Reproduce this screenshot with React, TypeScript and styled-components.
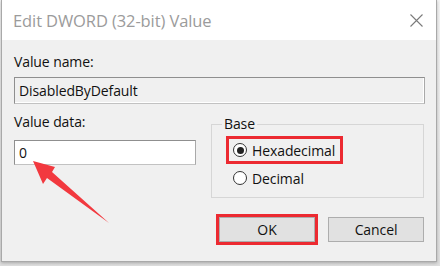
import * as React from 'react';
import styled, { createGlobalStyle } from 'styled-components';

const GlobalStyle = createGlobalStyle`
  html, body {
    margin: 0;
    padding: 0;
    background: #f4f4f4;
  }
  body {
    font-family: "Open Sans", "Noto Sans", "Liberation Sans", sans-serif;
  }
`;

const Stage = styled.div`
  position: relative;
  width: 440px;
  height: 266px;
  overflow: hidden;
  background: linear-gradient(#f4f4f4, #dedede);
`;

const Window = styled.div`
  width: 436px;
  height: 262px;
  box-sizing: border-box;
  margin-left: 1px;
  border: 1px solid #a9a9a9;
  border-top: 0;
  display: flex;
  flex-direction: column;
  background: #f0f0f0;
  box-shadow: 0 1px 3px rgba(0, 0, 0, 0.25);
`;

const TitleBar = styled.div`
  height: 40px;
  flex: none;
  background: #fff;
  display: flex;
  align-items: center;
  justify-content: space-between;
  padding: 0 0 0 11px;
`;

const Title = styled.span`
  font-size: 16.5px;
  color: #9b9b9b;
  letter-spacing: -0.1px;
`;

const CloseButton = styled.div`
  width: 40px;
  height: 40px;
  display: flex;
  align-items: center;
  justify-content: center;
`;

const Body = styled.div`
  flex: 1;
  display: flex;
  flex-direction: column;
  padding: 13px 11px 0 12px;
`;

const Label = styled.div`
  font-size: 14px;
  line-height: 18px;
  color: #111;
  letter-spacing: -0.1px;
`;

const Field = styled.div<{ $readOnly?: boolean; $width?: string; $height: number }>`
  box-sizing: border-box;
  width: ${p => p.$width || '100%'};
  height: ${p => p.$height}px;
  border: 1px solid #8f8f8f;
  border-right-color: #a9a9a9;
  border-bottom-color: #c2c2c2;
  box-shadow: inset 0 -1px 0 #fff, inset -1px 0 0 #fff;
  background: ${p => (p.$readOnly ? '#f0f0f0' : '#fff')};
  font-size: 14px;
  color: #111;
  display: flex;
  align-items: center;
  padding-left: 4px;
  letter-spacing: -0.1px;
`;

const Row = styled.div`
  display: flex;
  justify-content: space-between;
  margin-top: 9px;
`;

const Column = styled.div`
  display: flex;
  flex-direction: column;
  gap: 9px;
`;

const GroupBox = styled.fieldset`
  box-sizing: border-box;
  width: 213px;
  height: 82px;
  margin: 3px 1px 0 0;
  padding: 7px 0 0 17px;
  border: 1px solid #d6d6d6;
  display: flex;
  flex-direction: column;
`;

const Legend = styled.legend`
  font-size: 14px;
  color: #111;
  padding: 0 2px;
  margin-left: -7px;
  line-height: 16px;
  letter-spacing: -0.1px;
`;

const RadioOption = styled.div<{ $marked?: boolean }>`
  display: flex;
  align-items: center;
  gap: 5px;
  height: 22px;
  width: 111px;
  padding-left: 4px;
  box-sizing: border-box;
  font-size: 14px;
  color: #111;
  letter-spacing: -0.1px;
  outline: ${p => (p.$marked ? '3px solid #ec2a31' : 'none')};
  outline-offset: 0;
  margin-bottom: 6px;
`;

const RadioCircle = styled.span<{ $checked?: boolean }>`
  width: 12px;
  height: 12px;
  border-radius: 50%;
  border: 1px solid #333;
  background: #fff;
  display: flex;
  align-items: center;
  justify-content: center;
  flex: none;

  &::after {
    content: '';
    width: 7px;
    height: 7px;
    border-radius: 50%;
    background: ${p => (p.$checked ? '#222' : 'transparent')};
  }
`;

const ButtonRow = styled.div`
  display: flex;
  justify-content: flex-end;
  gap: 13px;
  margin-top: 19px;
  padding-right: 1px;
`;

const Button = styled.div<{ $marked?: boolean }>`
  box-sizing: border-box;
  width: 96px;
  height: 25px;
  background: #e1e1e1;
  border: 1px solid #adadad;
  display: flex;
  align-items: center;
  justify-content: center;
  font-size: 14px;
  color: #111;
  letter-spacing: -0.1px;
  outline: ${p => (p.$marked ? '3px solid #ec2a31' : 'none')};
  outline-offset: 0;
`;

const Arrow = styled.svg`
  position: absolute;
  left: 0;
  top: 0;
  pointer-events: none;
`;

export default function App() {
  return (
    <Stage>
      <GlobalStyle />
      <Window>
        <TitleBar>
          <Title>Edit DWORD (32-bit) Value</Title>
          <CloseButton>
            <svg width="13" height="13" viewBox="0 0 13 13">
              <path d="M0.5 0.5 L12.5 12.5 M12.5 0.5 L0.5 12.5" stroke="#7a7a7a" strokeWidth="1.1" />
            </svg>
          </CloseButton>
        </TitleBar>
        <Body>
          <Label>Value name:</Label>
          <Field $readOnly $height={27} style={{ marginTop: 6 }}>
            DisabledByDefault
          </Field>
          <Row>
            <Column>
              <Label>Value data:</Label>
              <Field $width="182px" $height={25}>0</Field>
            </Column>
            <GroupBox>
              <Legend>Base</Legend>
              <RadioOption $marked>
                <RadioCircle $checked />
                Hexadecimal
              </RadioOption>
              <RadioOption>
                <RadioCircle />
                Decimal
              </RadioOption>
            </GroupBox>
          </Row>
          <ButtonRow>
            <Button $marked>OK</Button>
            <Button>Cancel</Button>
          </ButtonRow>
        </Body>
      </Window>
      <Arrow width="440" height="266" viewBox="0 0 440 266">
        <polygon
          points="33,161 55,167 52,172 109,223 47,178 43,184"
          fill="#f2393f"
        />
      </Arrow>
    </Stage>
  );
}
